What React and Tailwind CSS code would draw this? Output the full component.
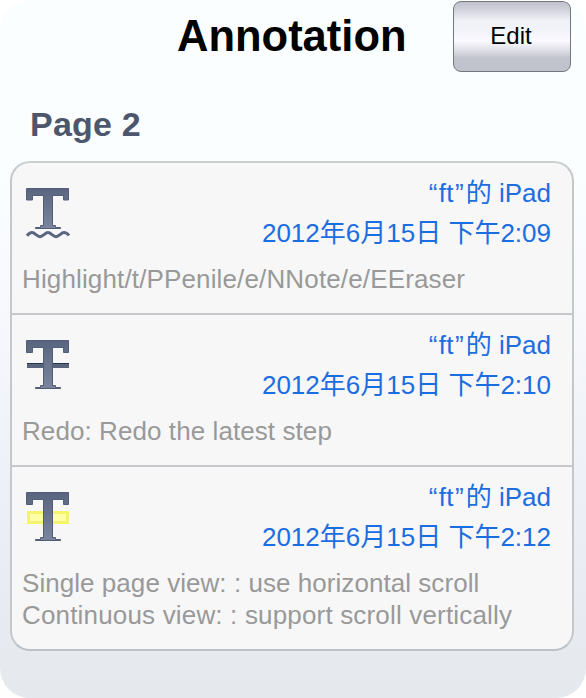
function LetterT({ kind }) {
  const id = `steel-${kind}`;
  return (
    <svg width="46" height="56" viewBox="0 0 46 56" className="block">
      <defs>
        <linearGradient id={id} x1="0" y1="0" x2="0" y2="1">
          <stop offset="0" stopColor="#59657f" />
          <stop offset="1" stopColor="#7b869e" />
        </linearGradient>
      </defs>
      {kind === 'highlight' && (
        <rect x="2.5" y="20.5" width="39" height="10" fill="#ffffa8" stroke="#f3f36e" strokeWidth="3" />
      )}
      {kind === 'strike' && (
        <g>
          <rect x="1" y="23" width="42" height="5" fill="#59647d" />
          <rect x="1" y="23" width="42" height="1" fill="#2b354a" />
        </g>
      )}
      {kind === 'wave' ? (
        <g>
          <path
            d="M.5.5H42.5V12H37.500V7.500H26.500V37.500H29.500V39.500H34.500V40.500H9.500V39.500H14.500V37.500H17.500V7.500H6.500V12H.5Z"
            fill={`url(#${id})`}
            stroke="#525e77"
            strokeWidth="1"
          />
          <path
            d="M1 47.800C3 45 4.500 44.500 6 44.500C9 44.500 11 48.700 14 48.700C17 48.700 19 44.500 22 44.500C25 44.500 27 48.700 30 48.700C33 48.700 35 44.500 38 44.500C40 44.500 41.500 45.500 43 47.500"
            fill="none"
            stroke="#5a6680"
            strokeWidth="2.900"
          />
        </g>
      ) : (
        <path
          d="M.5.5H42.500V12.500H37.500V7.500H26.500V45.500H29.500V47.500H34.500V48.500H9.500V47.500H14.500V45.500H17.500V7.500H6.500V12.500H.5Z"
          fill={`url(#${id})`}
          stroke="#525e77"
          strokeWidth="1"
        />
      )}
    </svg>
  );
}

const entries = [
  {
    kind: 'wave',
    time: '2012年6月15日 下午2:09',
    lines: [{ text: 'Highlight/t/PPenile/e/NNote/e/EEraser', tracking: 'tracking-[0.14px]' }],
  },
  {
    kind: 'strike',
    time: '2012年6月15日 下午2:10',
    lines: [{ text: 'Redo: Redo the latest step', tracking: 'tracking-[0.08px]' }],
  },
  {
    kind: 'highlight',
    time: '2012年6月15日 下午2:12',
    lines: [
      { text: 'Single page view: : use horizontal scroll', tracking: 'tracking-[0.05px]' },
      { text: 'Continuous view: : support scroll vertically', tracking: 'tracking-[0.17px]' },
    ],
  },
];

function Entry({ kind, time, lines }) {
  return (
    <li className="border-b-2 border-[#c6c7ca] pb-[18px] pl-[10px] pr-[21px] pt-[10px] last:border-b-0">
      <div className="flex h-20 items-start justify-between">
        <div className="ml-1 mt-[15px]">
          <LetterT kind={kind} />
        </div>
        <div className="whitespace-nowrap text-right text-[26px] leading-10 text-[#1b6de2]">
          <div>
            <span className="tracking-[1.5px]">“</span>
            <span className="tracking-[0.3px]">f</span>
            <span className="tracking-[1.3px]">t</span>
            <span className="tracking-[2.2px]">”</span>的 iPad
          </div>
          <div>{time}</div>
        </div>
      </div>
      <div className="mt-[10px] whitespace-nowrap text-[26px] leading-8 text-[#999]">
        {lines.map((line) => (
          <div key={line.text} className={line.tracking}>
            {line.text}
          </div>
        ))}
      </div>
    </li>
  );
}

export default function App() {
  return (
    <div className="h-[698px] w-[586px] overflow-hidden rounded-[30px] bg-[linear-gradient(180deg,#fbfeff_0px,#fbfeff_165px,#f7f9fd_300px,#eef1f7_470px,#e8ebf1_600px,#e5e9ee_698px)] font-['Liberation_Sans','Noto_Sans_CJK_SC',sans-serif]">
      <header className="flex h-[73px] items-start pl-[177px] pr-[15px] pt-px">
        <h1 className="w-[276px] whitespace-nowrap text-[43.500px] font-bold leading-[70px] text-black">Annotation</h1>
        <button className="h-[71px] w-[118px] rounded-[8px] border border-[#74767c] bg-[linear-gradient(180deg,#bfc0cb_0%,#d5d6df_13%,#f1f1f8_27%,#f3f3fa_43%,#fafaff_56%,#e3e3eb_68%,#c3c5ce_81%,#c1c3cc_100%)] pb-[1px] pr-[2px] text-2xl text-black">
          Edit
        </button>
      </header>
      <h2 className="mt-[31px] pl-[30px] text-[34px] font-bold leading-10 tracking-[0.2px] text-[#4c566c]">Page 2</h2>
      <ul className="ml-[10px] mt-[17px] h-[490px] w-[564px] overflow-hidden rounded-[20px] border-2 border-x-[#c5c7ca] border-b-[#bec0c7] border-t-[#cccfd0] bg-[#f7f7f7]">
        {entries.map((entry) => (
          <Entry key={entry.kind} {...entry} />
        ))}
      </ul>
    </div>
  );
}
